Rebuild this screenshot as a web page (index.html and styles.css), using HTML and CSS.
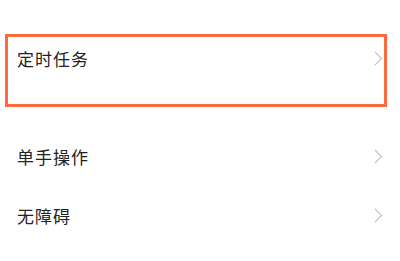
FILE: index.html
```html
<!DOCTYPE html>
<html>
<head>
<meta charset="utf-8">
<link rel="stylesheet" href="styles.css">
</head>
<body>
<div class="list">
  <div class="item highlight">
    <div class="row">
      <span class="label">定时任务</span>
      <svg class="chev" width="9" height="15" viewBox="0 0 9 15"><polyline points="1,1 7.5,7.5 1,14" fill="none" stroke="#c4c4c4" stroke-width="1.2"/></svg>
    </div>
  </div>
  <div class="item plain">
    <div class="row">
      <span class="label">单手操作</span>
      <svg class="chev" width="9" height="15" viewBox="0 0 9 15"><polyline points="1,1 7.5,7.5 1,14" fill="none" stroke="#c4c4c4" stroke-width="1.2"/></svg>
    </div>
  </div>
  <div class="item plain">
    <div class="row">
      <span class="label">无障碍</span>
      <svg class="chev" width="9" height="15" viewBox="0 0 9 15"><polyline points="1,1 7.5,7.5 1,14" fill="none" stroke="#c4c4c4" stroke-width="1.2"/></svg>
    </div>
  </div>
</div>
</body>
</html>
```

FILE: styles.css
```css
html, body {
  margin: 0;
  padding: 0;
  background: #ffffff;
}
body {
  width: 400px;
  height: 261px;
  overflow: hidden;
  font-family: "Noto Sans CJK SC", "Noto Sans", sans-serif;
  color: #222222;
}
.list {
  display: flex;
  flex-direction: column;
  padding-top: 34px;
}
.item {
  box-sizing: border-box;
  width: 382px;
  margin-left: 5px;
}
.highlight {
  height: 73px;
  border: 3px solid #ff6a3c;
  margin-bottom: 20px;
}
.highlight .row {
  height: 43px;
}
.plain .row {
  height: 59px;
}
.row {
  display: flex;
  align-items: center;
  justify-content: space-between;
  padding: 0 4px 0 12px;
}
.highlight .row {
  padding: 0 1px 0 9px;
}
.label {
  font-size: 17px;
  letter-spacing: 1px;
  line-height: 1;
}
.chev {
  display: block;
}
```
